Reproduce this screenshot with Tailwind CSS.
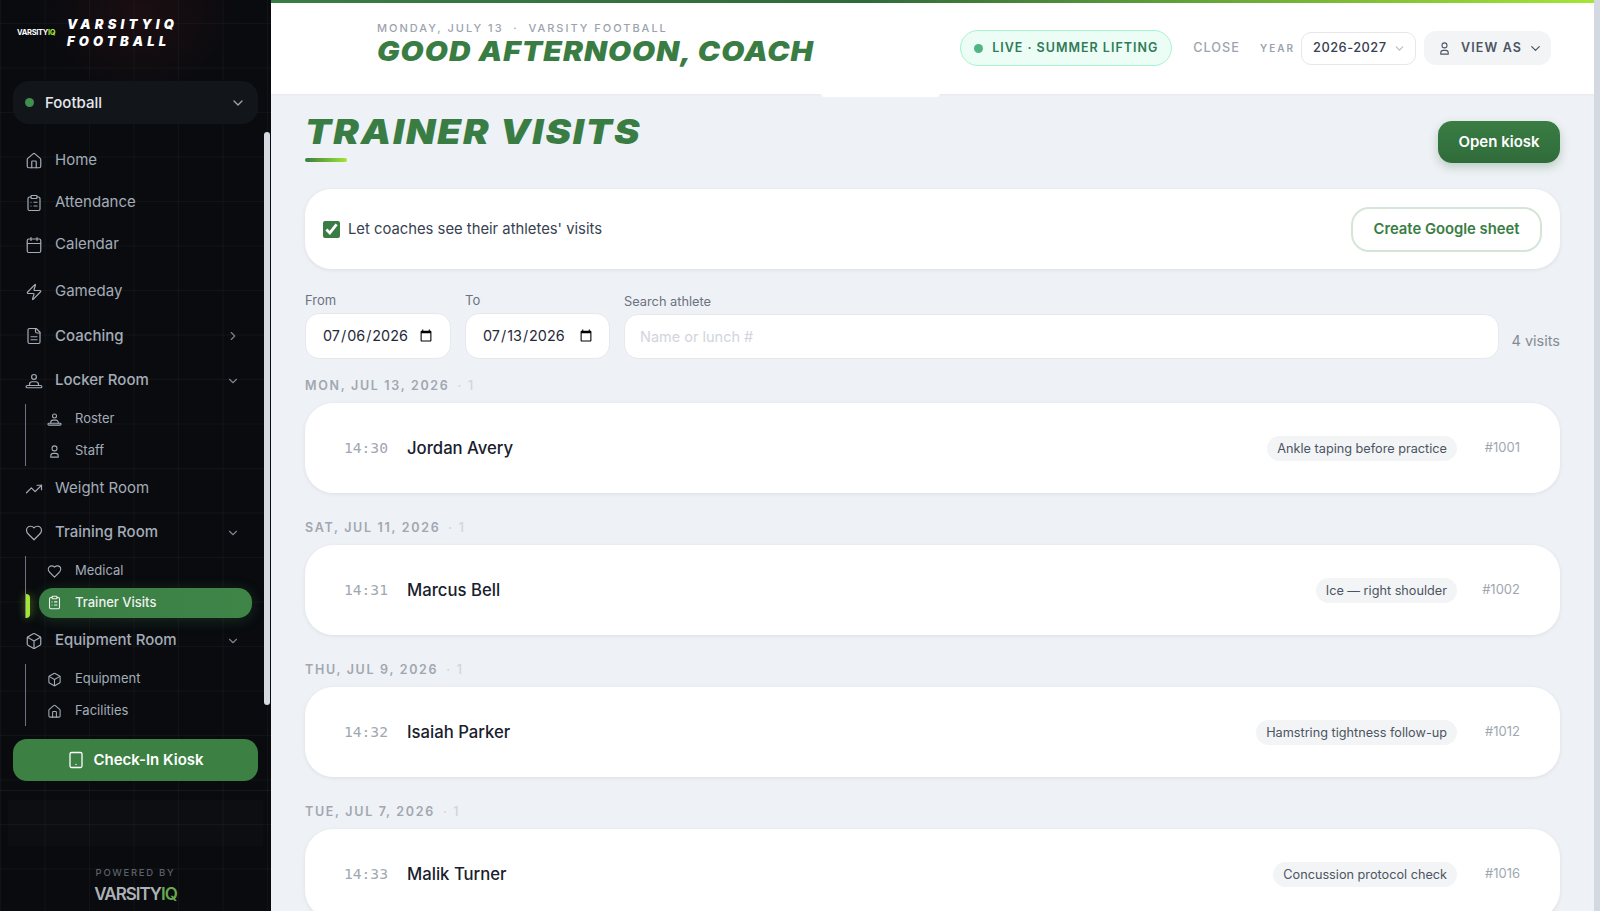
<!DOCTYPE html>
<html lang="en">
<head>
<meta charset="utf-8">
<title>Trainer Visits</title>
<script src="https://cdn.jsdelivr.net/npm/@tailwindcss/browser@4"></script>
</head>
<body class="h-[911px] w-[1600px] overflow-hidden bg-[#eef1f5] font-['Inter','Liberation_Sans',sans-serif]">
<div class="flex h-[911px]">

  <!-- sidebar -->
  <aside class="relative flex h-full w-[271px] shrink-0 flex-col overflow-hidden bg-[#090b0f] bg-[linear-gradient(rgba(255,255,255,0.03)_1px,transparent_1px),linear-gradient(90deg,rgba(255,255,255,0.03)_1px,transparent_1px)] bg-[size:44.5px_44.5px] bg-[position:0_23px]">
    <div class="absolute left-[40px] top-[-70px] h-[170px] w-[200px] rounded-full bg-[radial-gradient(closest-side,rgba(120,30,30,0.16),transparent)]"></div>

    <div class="relative flex h-[81px] items-center pb-[15px] pl-[17px]">
      <span class="w-[50px] text-[7.5px] font-bold tracking-[-0.04em] text-white">VARSITY<span class="text-[#a3e635]">IQ</span></span>
      <div class="text-[13px] leading-[17px] font-black tracking-[0.32em] text-white italic">VARSITYIQ<br>FOOTBALL</div>
    </div>

    <div class="relative mx-[13px] flex h-[43px] items-center rounded-2xl bg-[#12161a] pr-[12px] pl-[12px]">
      <span class="h-[9px] w-[9px] rounded-full bg-[#3f8f4f]"></span>
      <span class="ml-[11px] pt-[1px] text-[15px] font-medium text-[#e5e7eb]">Football</span>
      <svg class="ml-auto h-4 w-4 text-[#9ca3af]" viewBox="0 0 24 24" fill="none" stroke="currentColor" stroke-width="2" stroke-linecap="round" stroke-linejoin="round"><path d="m6 9 6 6 6-6"/></svg>
    </div>

    <nav class="relative mt-[15.5px] flex flex-col pl-[25px] text-[15px] text-[#a4acb7]">
      <a class="flex h-[42px] items-center gap-[12px]">
        <svg class="h-[18px] w-[18px]" viewBox="0 0 24 24" fill="none" stroke="currentColor" stroke-width="1.6" stroke-linecap="round" stroke-linejoin="round"><path d="M15 21v-8a1 1 0 0 0-1-1h-4a1 1 0 0 0-1 1v8"/><path d="M3 10a2 2 0 0 1 .709-1.528l7-5.999a2 2 0 0 1 2.582 0l7 5.999A2 2 0 0 1 21 10v9a2 2 0 0 1-2 2H5a2 2 0 0 1-2-2z"/></svg>
        Home
      </a>
      <a class="flex h-[42px] items-center gap-[12px]">
        <svg class="h-[18px] w-[18px]" viewBox="0 0 24 24" fill="none" stroke="currentColor" stroke-width="1.6" stroke-linecap="round" stroke-linejoin="round"><rect x="8" y="2" width="8" height="4" rx="1"/><path d="M16 4h2a2 2 0 0 1 2 2v14a2 2 0 0 1-2 2H6a2 2 0 0 1-2-2V6a2 2 0 0 1 2-2h2"/><path d="M12 11h4M12 16h4M8 11h.01M8 16h.01"/></svg>
        Attendance
      </a>
      <a class="flex h-[42px] items-center gap-[12px]">
        <svg class="h-[18px] w-[18px]" viewBox="0 0 24 24" fill="none" stroke="currentColor" stroke-width="1.6" stroke-linecap="round" stroke-linejoin="round"><rect x="3" y="4" width="18" height="18" rx="2"/><path d="M16 2v4M8 2v4M3 10h18"/></svg>
        Calendar
      </a>
      <a class="mt-[5px] flex h-[42px] items-center gap-[12px]">
        <svg class="h-[18px] w-[18px]" viewBox="0 0 24 24" fill="none" stroke="currentColor" stroke-width="1.6" stroke-linecap="round" stroke-linejoin="round"><path d="M4 14a1 1 0 0 1-.78-1.63l9.9-10.2a.5.5 0 0 1 .86.46l-1.92 6.02A1 1 0 0 0 13 10h7a1 1 0 0 1 .78 1.63l-9.9 10.2a.5.5 0 0 1-.86-.46l1.92-6.02A1 1 0 0 0 11 14z"/></svg>
        Gameday
      </a>
      <a class="mt-[2.5px] flex h-[42px] items-center gap-[12px] pr-[31px] font-medium">
        <svg class="h-[18px] w-[18px]" viewBox="0 0 24 24" fill="none" stroke="currentColor" stroke-width="1.6" stroke-linecap="round" stroke-linejoin="round"><path d="M15 2H6a2 2 0 0 0-2 2v16a2 2 0 0 0 2 2h12a2 2 0 0 0 2-2V7Z"/><path d="M14 2v4a2 2 0 0 0 2 2h4"/><path d="M16 13H8M16 17H8"/></svg>
        Coaching
        <svg class="ml-auto h-[14px] w-[14px] text-[#7b838e]" viewBox="0 0 24 24" fill="none" stroke="currentColor" stroke-width="2" stroke-linecap="round" stroke-linejoin="round"><path d="m9 18 6-6-6-6"/></svg>
      </a>
      <a class="mt-[2.5px] flex h-[42px] items-center gap-[12px] pr-[31px] font-medium">
        <svg class="h-[18px] w-[18px]" viewBox="0 0 24 24" fill="none" stroke="currentColor" stroke-width="1.6" stroke-linecap="round" stroke-linejoin="round"><circle cx="12" cy="6.5" r="3.2"/><path d="M6 18v-1.5A3.5 3.5 0 0 1 9.5 13h5a3.5 3.5 0 0 1 3.5 3.5V18"/><rect x="1.5" y="18" width="21" height="3" rx="1.5"/></svg>
        Locker Room
        <svg class="ml-auto h-[14px] w-[14px] text-[#7b838e]" viewBox="0 0 24 24" fill="none" stroke="currentColor" stroke-width="2" stroke-linecap="round" stroke-linejoin="round"><path d="m6 9 6 6 6-6"/></svg>
      </a>
      <div class="mt-[2px] border-l-[1.5px] border-[#6b7280] pl-[21px] text-[13px]">
        <a class="flex h-[31px] items-center gap-[13px]">
          <svg class="h-[15px] w-[15px]" viewBox="0 0 24 24" fill="none" stroke="currentColor" stroke-width="1.7" stroke-linecap="round" stroke-linejoin="round"><circle cx="12" cy="6.5" r="3.2"/><path d="M6 18v-1.5A3.5 3.5 0 0 1 9.5 13h5a3.5 3.5 0 0 1 3.5 3.5V18"/><rect x="1.5" y="18" width="21" height="3" rx="1.5"/></svg>
          Roster
        </a>
        <a class="flex h-[31px] items-center gap-[13px] pt-[2px]">
          <svg class="h-[15px] w-[15px]" viewBox="0 0 24 24" fill="none" stroke="currentColor" stroke-width="1.7" stroke-linecap="round" stroke-linejoin="round"><circle cx="12" cy="7" r="4"/><path d="M6 21v-2a4 4 0 0 1 4-4h4a4 4 0 0 1 4 4v2z"/></svg>
          Staff
        </a>
      </div>
      <a class="mt-[2px] flex h-[42px] items-center gap-[12px]">
        <svg class="h-[18px] w-[18px]" viewBox="0 0 24 24" fill="none" stroke="currentColor" stroke-width="1.6" stroke-linecap="round" stroke-linejoin="round"><path d="M22 7 13.5 15.5l-5-5L2 17"/><path d="M16 7h6v6"/></svg>
        Weight Room
      </a>
      <a class="mt-[2px] flex h-[42px] items-center gap-[12px] pr-[31px] font-medium">
        <svg class="h-[18px] w-[18px]" viewBox="0 0 24 24" fill="none" stroke="currentColor" stroke-width="1.6" stroke-linecap="round" stroke-linejoin="round"><path d="M19 14c1.49-1.46 3-3.21 3-5.5A5.5 5.5 0 0 0 16.5 3c-1.76 0-3 .5-4.5 2-1.5-1.5-2.74-2-4.5-2A5.5 5.5 0 0 0 2 8.5c0 2.3 1.5 4.05 3 5.5l7 7Z"/></svg>
        Training Room
        <svg class="ml-auto h-[14px] w-[14px] text-[#7b838e]" viewBox="0 0 24 24" fill="none" stroke="currentColor" stroke-width="2" stroke-linecap="round" stroke-linejoin="round"><path d="m6 9 6 6 6-6"/></svg>
      </a>
      <div class="relative mt-[2px] border-l-[1.5px] border-[#6b7280] pl-[21px] text-[13px]">
        <a class="flex h-[31px] items-center gap-[13px]">
          <svg class="h-[15px] w-[15px]" viewBox="0 0 24 24" fill="none" stroke="currentColor" stroke-width="1.7" stroke-linecap="round" stroke-linejoin="round"><path d="M19 14c1.49-1.46 3-3.21 3-5.5A5.5 5.5 0 0 0 16.5 3c-1.76 0-3 .5-4.5 2-1.5-1.5-2.74-2-4.5-2A5.5 5.5 0 0 0 2 8.5c0 2.3 1.5 4.05 3 5.5l7 7Z"/></svg>
          Medical
        </a>
        <span class="absolute bottom-0 left-0 h-[24px] w-[4px] rounded-r bg-[#a3e635] shadow-[0_0_8px_rgba(163,230,53,0.6)]"></span>
        <a class="mt-[1px] ml-[-8px] mr-[19px] flex h-[30px] items-center gap-[13px] rounded-[14px] bg-[linear-gradient(90deg,#3a7d44,#3f8548)] pl-[8px] font-medium text-[#eef2f0] shadow-[0_2px_14px_rgba(58,125,68,0.3)]">
          <svg class="h-[15px] w-[15px]" viewBox="0 0 24 24" fill="none" stroke="currentColor" stroke-width="1.7" stroke-linecap="round" stroke-linejoin="round"><rect x="8" y="2" width="8" height="4" rx="1"/><path d="M16 4h2a2 2 0 0 1 2 2v14a2 2 0 0 1-2 2H6a2 2 0 0 1-2-2V6a2 2 0 0 1 2-2h2"/><path d="M12 11h4M12 16h4M8 11h.01M8 16h.01"/></svg>
          Trainer Visits
        </a>
      </div>
      <a class="mt-[2px] flex h-[42px] items-center gap-[12px] pr-[31px] font-medium">
        <svg class="h-[18px] w-[18px]" viewBox="0 0 24 24" fill="none" stroke="currentColor" stroke-width="1.6" stroke-linecap="round" stroke-linejoin="round"><path d="M21 8a2 2 0 0 0-1-1.73l-7-4a2 2 0 0 0-2 0l-7 4A2 2 0 0 0 3 8v8a2 2 0 0 0 1 1.73l7 4a2 2 0 0 0 2 0l7-4A2 2 0 0 0 21 16Z"/><path d="M3.3 7 12 12l8.7-5M12 22V12"/></svg>
        Equipment Room
        <svg class="ml-auto h-[14px] w-[14px] text-[#7b838e]" viewBox="0 0 24 24" fill="none" stroke="currentColor" stroke-width="2" stroke-linecap="round" stroke-linejoin="round"><path d="m6 9 6 6 6-6"/></svg>
      </a>
      <div class="mt-[2px] border-l-[1.5px] border-[#6b7280] pl-[21px] text-[13px]">
        <a class="flex h-[31px] items-center gap-[13px]">
          <svg class="h-[15px] w-[15px]" viewBox="0 0 24 24" fill="none" stroke="currentColor" stroke-width="1.7" stroke-linecap="round" stroke-linejoin="round"><path d="M21 8a2 2 0 0 0-1-1.73l-7-4a2 2 0 0 0-2 0l-7 4A2 2 0 0 0 3 8v8a2 2 0 0 0 1 1.73l7 4a2 2 0 0 0 2 0l7-4A2 2 0 0 0 21 16Z"/><path d="M3.3 7 12 12l8.7-5M12 22V12"/></svg>
          Equipment
        </a>
        <a class="flex h-[31px] items-center gap-[13px] pt-[2px]">
          <svg class="h-[15px] w-[15px]" viewBox="0 0 24 24" fill="none" stroke="currentColor" stroke-width="1.7" stroke-linecap="round" stroke-linejoin="round"><path d="M15 21v-8a1 1 0 0 0-1-1h-4a1 1 0 0 0-1 1v8"/><path d="M3 10a2 2 0 0 1 .709-1.528l7-5.999a2 2 0 0 1 2.582 0l7 5.999A2 2 0 0 1 21 10v9a2 2 0 0 1-2 2H5a2 2 0 0 1-2-2z"/></svg>
          Facilities
        </a>
      </div>
    </nav>

    <button class="relative mx-[13px] mt-[13.5px] flex h-[42px] items-center justify-center gap-[8px] rounded-[14px] bg-[#3c8044] text-[15px] font-semibold text-white">
      <svg class="h-[18px] w-[18px]" viewBox="0 0 24 24" fill="none" stroke="currentColor" stroke-width="1.7" stroke-linecap="round" stroke-linejoin="round"><rect x="4" y="2" width="16" height="20" rx="2"/><path d="M12 18h.01"/></svg>
      Check-In Kiosk
    </button>

    <div class="relative mt-[9px] border-t border-white/5 pt-[9px]">
      <div class="mx-[8px] h-[46px] bg-white/[0.015]"></div>
    </div>

    <div class="relative mt-[20px] text-center">
      <div class="text-[9.5px] leading-[14px] font-medium tracking-[0.18em] text-[#5c6167]">POWERED BY</div>
      <div class="mt-[3px] text-[17px] leading-[22px] font-semibold tracking-[-0.06em] text-[#aeb2b6]">VARSITY<span class="text-[#6aa84f]">IQ</span></div>
    </div>

    <!-- scrollbar thumb -->
    <div class="absolute right-[1px] top-[132px] h-[573px] w-[6px] rounded-full bg-[#d5dae3]"></div>
  </aside>

  <!-- main -->
  <main class="relative h-full min-w-0 flex-1 overflow-hidden">
    <div class="h-[3px] bg-[linear-gradient(90deg,#3a7d44,#2f6b3a_45%,#a3e635)]"></div>
    <header class="flex h-[91px] items-center bg-white pr-[43px] pl-[106px] shadow-[0_1px_2px_rgba(0,0,0,0.04)]">
      <div class="mb-[9px]">
        <div class="text-[11px] leading-[14px] font-medium tracking-[0.18em] text-[#9ca3af]">MONDAY, JULY 13 &nbsp;·&nbsp; VARSITY FOOTBALL</div>
        <h1 class="mt-[2px] origin-left scale-x-[1.105] text-[27px] leading-[30px] font-black tracking-[0.035em] text-[#3a7d44] italic">GOOD AFTERNOON, COACH</h1>
      </div>
      <div class="ml-auto mb-[1px] flex items-center">
        <div class="flex h-[36px] w-[212px] items-center justify-center gap-[9px] rounded-full border border-[#a7f3d0] bg-[#ecfdf5] text-[12.5px] font-semibold tracking-[0.08em] text-[#2f7a58]">
          <span class="h-[9px] w-[9px] rounded-full bg-[#4fb584]"></span>
          LIVE · SUMMER LIFTING
        </div>
        <span class="ml-[21px] text-[12.7px] font-medium tracking-[0.08em] text-[#9ca3af]">CLOSE</span>
        <span class="ml-[20px] text-[10px] font-semibold tracking-[0.2em] text-[#9ca3af]">YEAR</span>
        <div class="ml-[6px] flex h-[33px] w-[115px] items-center rounded-[10px] border border-[#e5e7eb] bg-white pr-[9px] pl-[11px] text-[12.8px] font-medium tracking-[0.04em] text-[#374151]">
          2026-2027
          <svg class="ml-auto h-[13px] w-[13px] text-[#b4b9c2]" viewBox="0 0 24 24" fill="none" stroke="currentColor" stroke-width="2" stroke-linecap="round" stroke-linejoin="round"><path d="m6 9 6 6 6-6"/></svg>
        </div>
        <div class="ml-[8px] flex h-[34px] w-[127px] items-center rounded-[12px] bg-[#f3f4f6] pr-[8px] pl-[13px] text-[12.5px] font-semibold tracking-[0.09em] text-[#4b5563]">
          <svg class="mr-[9px] h-[15px] w-[15px] shrink-0" viewBox="0 0 24 24" fill="none" stroke="currentColor" stroke-width="1.7" stroke-linecap="round" stroke-linejoin="round"><circle cx="12" cy="7" r="4"/><path d="M6 21v-2a4 4 0 0 1 4-4h4a4 4 0 0 1 4 4v2z"/></svg>
          VIEW AS
          <svg class="ml-auto h-[15px] w-[15px]" viewBox="0 0 24 24" fill="none" stroke="currentColor" stroke-width="2" stroke-linecap="round" stroke-linejoin="round"><path d="m6 9 6 6 6-6"/></svg>
        </div>
      </div>
    </header>
    <div class="absolute left-[550px] top-[92px] h-[5px] w-[119px] rounded-b-sm bg-white"></div>

    <div class="px-[34px]">
      <div class="flex h-[95px] items-start justify-between">
        <div class="pt-[23px]">
          <h2 class="origin-left scale-x-[1.125] text-[34px] leading-[30px] font-black tracking-[0.05em] text-[#3a7d44] italic">TRAINER VISITS</h2>
          <div class="mt-[11px] h-[4px] w-[42px] rounded-full bg-[linear-gradient(90deg,#3a7d44,#a3e635)]"></div>
        </div>
        <button class="mt-[27px] h-[42px] w-[122px] rounded-[14px] bg-[linear-gradient(180deg,#3a7d44,#2f6b3a)] text-[15px] font-semibold text-white shadow-[0_4px_10px_rgba(47,107,58,0.28)]">Open kiosk</button>
      </div>

      <div class="flex h-[80px] items-center justify-between rounded-[26px] border border-white bg-white pr-[17px] pl-[17px] shadow-[0_1px_4px_rgba(0,0,0,0.08)]">
        <label class="flex items-center gap-[8px] text-[14.8px] text-[#374151]">
          <input type="checkbox" checked class="h-[17px] w-[17px] accent-[#3a7d44]">
          Let coaches see their athletes' visits
        </label>
        <button class="h-[45px] w-[191px] rounded-[18px] border-2 border-[#d5e5d8] bg-white text-[14.8px] font-semibold text-[#3a7d44]">Create Google sheet</button>
      </div>

      <div class="mt-[23px] flex items-end gap-[14px]">
        <div class="w-[146px]">
          <label class="block text-[13px] leading-[16px] text-[#6b7280]">From</label>
          <input type="date" value="2026-07-06" class="mt-[5px] h-[46px] w-full rounded-[14px] border border-[#e5e8ec] bg-white pr-[15px] pl-[16px] text-[14.4px] text-[#1f2937]">
        </div>
        <div class="w-[145px]">
          <label class="block text-[13px] leading-[16px] text-[#6b7280]">To</label>
          <input type="date" value="2026-07-13" class="mt-[5px] h-[46px] w-full rounded-[14px] border border-[#e5e8ec] bg-white pr-[14px] pl-[16px] text-[14.4px] text-[#1f2937]">
        </div>
        <div class="flex-1">
          <label class="block text-[12.8px] leading-[16px] text-[#6b7280]">Search athlete</label>
          <input type="text" placeholder="Name or lunch #" class="mt-[4px] h-[45px] w-full rounded-[14px] border border-[#e5e8ec] bg-white px-[15px] text-[14.5px] placeholder:text-[#d1d5db]">
        </div>
        <span class="ml-[-2px] pb-[7px] text-[14.5px] text-[#858b95]">4 visits</span>
      </div>

      <div class="mt-[18px] flex flex-col">
        <div class="flex h-[19px] items-center text-[12.5px] font-semibold tracking-[0.135em] text-[#a1a7b1]">MON, JUL 13, 2026<span class="ml-[8px] font-medium tracking-normal text-[#d1d5db]">·&nbsp;&nbsp;1</span></div>
        <div class="mt-[7px] flex h-[90px] items-center rounded-[28px] border border-white bg-white pr-[39px] pl-[38px] shadow-[0_1px_4px_rgba(0,0,0,0.08)]">
          <span class="w-[63px] font-['DejaVu_Sans_Mono',monospace] text-[14.6px] text-[#a1a7b1]">14:30</span>
          <span class="pt-[1px] text-[16.7px] font-medium text-[#18202c]">Jordan Avery</span>
          <span class="ml-auto rounded-full bg-[#f3f4f6] px-[10px] py-[4px] text-[12.7px] leading-[17px] text-[#4b5563]">Ankle taping before practice</span>
          <span class="w-[63px] text-right text-[13px] text-[#a1a7b1]">#1001</span>
        </div>

        <div class="mt-[26px] flex h-[19px] items-center text-[12.5px] font-semibold tracking-[0.135em] text-[#a1a7b1]">SAT, JUL 11, 2026<span class="ml-[8px] font-medium tracking-normal text-[#d1d5db]">·&nbsp;&nbsp;1</span></div>
        <div class="mt-[7px] flex h-[90px] items-center rounded-[28px] border border-white bg-white pr-[39px] pl-[38px] shadow-[0_1px_4px_rgba(0,0,0,0.08)]">
          <span class="w-[63px] font-['DejaVu_Sans_Mono',monospace] text-[14.6px] text-[#a1a7b1]">14:31</span>
          <span class="pt-[1px] text-[16.7px] font-medium text-[#18202c]">Marcus Bell</span>
          <span class="ml-auto rounded-full bg-[#f3f4f6] px-[10px] py-[4px] text-[12.7px] leading-[17px] text-[#4b5563]">Ice — right shoulder</span>
          <span class="w-[63px] text-right text-[13px] text-[#a1a7b1]">#1002</span>
        </div>

        <div class="mt-[26px] flex h-[19px] items-center text-[12.5px] font-semibold tracking-[0.135em] text-[#a1a7b1]">THU, JUL 9, 2026<span class="ml-[8px] font-medium tracking-normal text-[#d1d5db]">·&nbsp;&nbsp;1</span></div>
        <div class="mt-[7px] flex h-[90px] items-center rounded-[28px] border border-white bg-white pr-[39px] pl-[38px] shadow-[0_1px_4px_rgba(0,0,0,0.08)]">
          <span class="w-[63px] font-['DejaVu_Sans_Mono',monospace] text-[14.6px] text-[#a1a7b1]">14:32</span>
          <span class="pt-[1px] text-[16.7px] font-medium text-[#18202c]">Isaiah Parker</span>
          <span class="ml-auto rounded-full bg-[#f3f4f6] px-[10px] py-[4px] text-[12.7px] leading-[17px] text-[#4b5563]">Hamstring tightness follow-up</span>
          <span class="w-[63px] text-right text-[13px] text-[#a1a7b1]">#1012</span>
        </div>

        <div class="mt-[26px] flex h-[19px] items-center text-[12.5px] font-semibold tracking-[0.135em] text-[#a1a7b1]">TUE, JUL 7, 2026<span class="ml-[8px] font-medium tracking-normal text-[#d1d5db]">·&nbsp;&nbsp;1</span></div>
        <div class="mt-[7px] flex h-[90px] items-center rounded-[28px] border border-white bg-white pr-[39px] pl-[38px] shadow-[0_1px_4px_rgba(0,0,0,0.08)]">
          <span class="w-[63px] font-['DejaVu_Sans_Mono',monospace] text-[14.6px] text-[#a1a7b1]">14:33</span>
          <span class="pt-[1px] text-[16.7px] font-medium text-[#18202c]">Malik Turner</span>
          <span class="ml-auto rounded-full bg-[#f3f4f6] px-[10px] py-[4px] text-[12.7px] leading-[17px] text-[#4b5563]">Concussion protocol check</span>
          <span class="w-[63px] text-right text-[13px] text-[#a1a7b1]">#1016</span>
        </div>
      </div>
    </div>
  </main>

  <!-- page scrollbar -->
  <div class="h-full w-[6px] shrink-0 bg-[#d3d8e1]"></div>
</div>
</body>
</html>
